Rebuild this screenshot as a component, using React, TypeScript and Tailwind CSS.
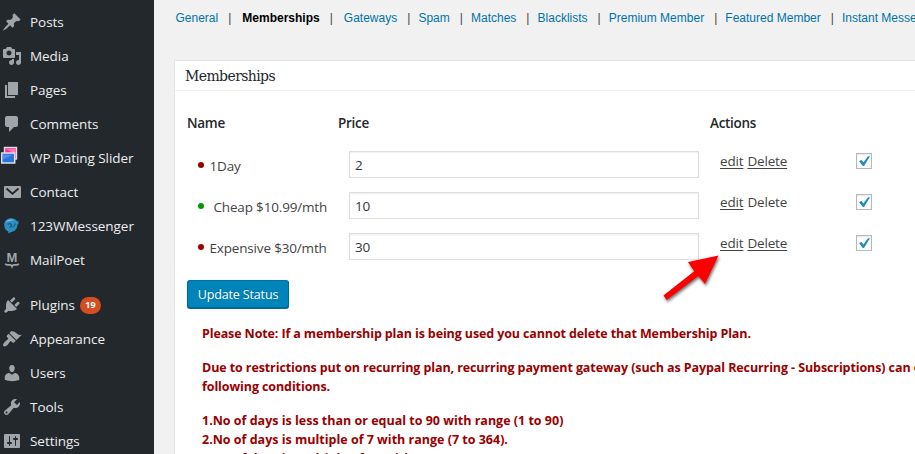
import type { ReactNode } from "react";

type MenuItem = {
  label: string;
  icon: ReactNode;
  badge?: string;
  spaced?: boolean;
};

type Plan = {
  name: string;
  price: string;
  active?: boolean;
  deletable: boolean;
};

function Dashicon({ d }: { d: string }) {
  return (
    <svg viewBox="0 0 20 20" className="size-5 fill-[#a0a5aa]">
      <path d={d} />
    </svg>
  );
}

function SliderIcon() {
  return (
    <svg viewBox="0 0 20 20" className="-mt-1 -ml-0.5 mr-0.5 size-5">
      <rect x="4.500" y="1.500" width="12" height="11.500" fill="#fb2f97" stroke="#eadbe5" strokeWidth="1.400" />
      <path d="M6 3h9.500v5z" fill="#ff7dbd" />
      <rect x="1.700" y="7" width="13" height="10" fill="#2b74dc" stroke="#dde1e6" strokeWidth="1.500" />
      <path d="M3 8.500h10L3 13.500z" fill="#4f90ea" />
    </svg>
  );
}

function MailIcon() {
  return (
    <svg viewBox="0 0 20 20" className="size-5">
      <rect x="2" y="4" width="17" height="12" rx="1" fill="#a0a5aa" />
      <path d="M4.500 6.500l6 5.200 6-5.200" fill="none" stroke="#23282d" strokeWidth="1.900" />
    </svg>
  );
}

function BirdIcon() {
  return (
    <svg viewBox="0 0 20 20" className="size-5">
      <path
        d="M2.200 8.500C2.200 4.800 5.200 2.200 9.200 2.200c3 0 5.200 1.300 6 3.300l1.900-.2-1 1.700.8.9-1.500.7c0 4.200-2.600 7.200-6.600 7.600l-2.600 1.400.2-1.900C3.800 14.600 2 11.700 2.200 8.500z"
        fill="#2a8fc4"
      />
      <path d="M4 6.300C5.600 3.700 9.500 2.700 12.300 4.200c-3-.1-5.500.7-8.300 2.100z" fill="#9cc6da" />
      <path d="M5.500 8.300c1.900-1 3.500-.6 3.900.8.3 1.200-.5 2-1.600 2.300M10.500 11.300c1.500-.5 2.600-1.800 3-3.800" fill="none" stroke="#1c4f6b" strokeWidth="1.100" />
    </svg>
  );
}

function MailPoetIcon() {
  return (
    <svg viewBox="0 0 20 20" className="size-5">
      <text x="9.900" y="12" textAnchor="middle" fontSize="13" fontWeight="700" letterSpacing="0" fontFamily="Liberation Sans, sans-serif" fill="#a0a5aa">
        M
      </text>
      <path d="M3.300 13.600c.8 1.800 2.600 1.300 4.500 1.300 1.200 0 1.800.5 2.200 1.600.4-1.100 1-1.600 2.200-1.600 1.900 0 3.700.5 4.500-1.300" fill="none" stroke="#a0a5aa" strokeWidth="1.700" />
    </svg>
  );
}

const menu: MenuItem[] = [
  {
    label: "Posts",
    icon: <Dashicon d="M10.44 3.02l1.82-1.82 6.36 6.35-1.83 1.82c-1.05-.68-2.48-.57-3.41.36l-.75.75c-.92.93-1.04 2.35-.35 3.41l-1.83 1.82-2.41-2.41-2.8 2.79c-.42.42-3.38 2.71-3.8 2.29s1.86-3.39 2.28-3.81l2.79-2.79L4.1 9.36l1.83-1.82c1.05.69 2.48.57 3.4-.36l.75-.75c.93-.92 1.05-2.35.36-3.41z" />,
  },
  {
    label: "Media",
    icon: <Dashicon d="M13 11V4c0-.55-.45-1-1-1h-1.67L9 1H5L3.67 3H2c-.55 0-1 .45-1 1v7c0 .55.45 1 1 1h10c.55 0 1-.45 1-1zM7 4.5c1.38 0 2.5 1.12 2.5 2.5S8.38 9.500 7 9.500 4.500 8.380 4.500 7 5.620 4.500 7 4.500zM14 6h5v10.500c0 1.380-1.120 2.500-2.500 2.500S14 17.880 14 16.500s1.120-2.500 2.500-2.500c.17 0 .34.02.5.05V9h-3V6zm-4 8.050V13h2v3.500c0 1.380-1.120 2.500-2.500 2.500S7 17.880 7 16.500 8.120 14 9.500 14c.17 0 .34.02.5.05z" />,
  },
  { label: "Pages", icon: <Dashicon d="M6 15V2h10v13H6zm-1 1h8v2H3V5h2v11z" /> },
  {
    label: "Comments",
    icon: <Dashicon d="M5 2h9c1.100 0 2 .9 2 2v7c0 1.100-.9 2-2 2h-2l-5 5v-5H5c-1.100 0-2-.9-2-2V4c0-1.100.9-2 2-2z" />,
  },
  { label: "WP Dating Slider", icon: <SliderIcon /> },
  { label: "Contact", icon: <MailIcon /> },
  { label: "123WMessenger", icon: <BirdIcon /> },
  { label: "MailPoet", icon: <MailPoetIcon /> },
  {
    label: "Plugins",
    badge: "19",
    spaced: true,
    icon: <Dashicon d="M13.11 4.36L9.87 7.6 8 5.73l3.24-3.24c.35-.34 1.05-.2 1.56.32.52.51.66 1.21.31 1.55zm-8 1.77l.91-1.12 9.01 9.01-1.19.84c-.71.71-2.63 1.16-3.82 1.16H6.14L4.9 17.26c-.59.59-1.54.59-2.12 0-.59-.58-.59-1.53 0-2.12l1.24-1.24v-3.88c0-1.13.4-3.19 1.09-3.89zm7.26 3.97l3.24-3.24c.34-.35 1.04-.21 1.55.31.52.51.66 1.21.31 1.55l-3.24 3.25z" />,
  },
  {
    label: "Appearance",
    icon: <Dashicon d="M14.48 11.06L7.41 3.99l1.5-1.5c.5-.56 2.3-.47 3.51.32 1.21.8 1.43 1.28 2.91 2.1 1.18.64 2.45 1.26 4.45.85zm-.71.71L6.7 4.7 4.93 6.47c-.39.39-.39 1.02 0 1.41l1.06 1.06c.39.39.39 1.03 0 1.42-.6.6-1.43 1.11-2.21 1.69-.35.26-.7.53-1.01.84C1.43 14.23.4 16.08 1.4 17.07c.99 1 2.84-.03 4.18-1.36.31-.31.58-.66.85-1.02.57-.78 1.08-1.61 1.69-2.21.39-.39 1.02-.39 1.41 0l1.06 1.06c.39.39 1.02.39 1.41 0z" />,
  },
  {
    label: "Users",
    icon: <Dashicon d="M10 9.25c-2.27 0-2.73-3.44-2.73-3.44C7 4.02 7.82 2 9.97 2c2.16 0 2.98 2.02 2.71 3.81 0 0-.41 3.44-2.68 3.44zm0 2.57L12.72 10c2.39 0 4.52 2.33 4.52 4.53v2.49s-3.65 1.13-7.24 1.13c-3.65 0-7.24-1.13-7.24-1.13v-2.49c0-2.25 1.94-4.48 4.47-4.48z" />,
  },
  {
    label: "Tools",
    icon: <Dashicon d="M16.68 9.77c-1.34 1.34-3.3 1.67-4.95.99l-5.41 6.52c-.99.99-2.59.99-3.58 0s-.99-2.59 0-3.57l6.52-5.42c-.68-1.65-.35-3.61.99-4.95 1.28-1.28 3.12-1.62 4.72-1.06l-2.89 2.89 2.82 2.82 2.86-2.87c.53 1.58.18 3.39-1.08 4.65zM3.81 16.21c.4.39 1.04.39 1.43 0 .4-.4.4-1.04 0-1.43-.39-.4-1.03-.4-1.43 0-.39.39-.39 1.03 0 1.43z" />,
  },
  {
    label: "Settings",
    icon: <Dashicon d="M18 16V4c0-.55-.45-1-1-1H3c-.55 0-1 .45-1 1v12c0 .55.45 1 1 1h14c.55 0 1-.45 1-1zM8 11h1c.55 0 1 .45 1 1s-.45 1-1 1H8v1.500c0 .28-.22.5-.5.5s-.5-.22-.5-.5V13H6c-.55 0-1-.45-1-1s.45-1 1-1h1V5.500c0-.28.22-.5.5-.5s.5.22.5.5V11zm5-2h-1c-.55 0-1-.45-1-1s.45-1 1-1h1V5.500c0-.28.22-.5.5-.5s.5.22.5.5V7h1c.55 0 1 .45 1 1s-.45 1-1 1h-1v5.500c0 .28-.22.5-.5.5s-.5-.22-.5-.5V9z" />,
  },
];

const tabs = [
  "General",
  "Memberships",
  "Gateways",
  "Spam",
  "Matches",
  "Blacklists",
  "Premium Member",
  "Featured Member",
  "Instant Messenger",
];

const plans: Plan[] = [
  { name: "1Day", price: "2", deletable: true },
  { name: "Cheap $10.99/mth", price: "10", active: true, deletable: false },
  { name: "Expensive $30/mth", price: "30", deletable: true },
];

function Sidebar() {
  return (
    <aside className="w-[154px] shrink-0 bg-[#23282d] pt-[5px]">
      {menu.map((item) => (
        <a
          key={item.label}
          className={`flex h-[34px] items-center pl-0.5 text-[13.5px] tracking-[-0.05px] text-[#eee] ${item.spaced ? "mt-[11px]" : ""}`}
        >
          {item.icon}
          <span className="ml-2 whitespace-nowrap">{item.label}</span>
          {item.badge ? (
            <span className="ml-[5px] flex h-[17px] w-[21px] items-center justify-center rounded-full bg-[#d54e21] text-[9px] font-bold tracking-normal text-white">
              {item.badge}
            </span>
          ) : null}
        </a>
      ))}
    </aside>
  );
}

function TabBar() {
  return (
    <nav className="ml-[21.5px] flex h-9 items-center whitespace-nowrap font-['Liberation_Sans',Arial,sans-serif] text-xs tracking-normal text-[#0073aa]">
      {tabs.map((tab, i) => (
        <div key={tab} className="flex">
          {i > 0 ? (
            <span className={`ml-2.5 text-[#444] ${i < 3 ? "mr-[11px]" : "mr-[8.1px]"}`}>|</span>
          ) : null}
          <a className={tab === "Memberships" ? "font-bold text-black" : ""}>{tab}</a>
        </div>
      ))}
    </nav>
  );
}

function PlanRow({ plan }: { plan: Plan }) {
  return (
    <div className="grid h-[41px] grid-cols-[151px_372px_146px_16px] items-start text-[#444]">
      <div className="mt-[13px] flex items-center pl-[11px] leading-[19px] whitespace-nowrap">
        <span className={`-mt-[3px] size-[5.5px] rounded-full ${plan.active ? "bg-[#090]" : "bg-[#900]"}`} />
        <span className={plan.active ? "ml-2.5" : "ml-1.5"}>{plan.name}</span>
      </div>
      <input
        defaultValue={plan.price}
        className="mt-[7px] ml-[11px] h-[27px] w-[350px] border border-[#ddd] bg-white px-[5px] text-[13.5px] text-[#32373c] shadow-[inset_0_1px_2px_rgba(0,0,0,0.07)]"
      />
      <div className="mt-2 flex gap-1 pl-2.5 leading-[19px]">
        <a className="underline underline-offset-2">edit</a>
        <a className={plan.deletable ? "underline underline-offset-2" : ""}>Delete</a>
      </div>
      <span className="mt-[9px] flex size-4 items-center justify-center border border-[#b4b9be] bg-white shadow-[inset_0_1px_2px_rgba(0,0,0,0.1)]">
        <svg viewBox="0 0 14 14" className="size-3.5 shrink-0 fill-[#1e8cbe]">
          <path d="M2 7.100L4.600 6l1.800 2.400L11 2.300h2L7 12H5.800z" />
        </svg>
      </span>
    </div>
  );
}

function Notes() {
  return (
    <div className="mt-4 ml-[15px] text-[12.5px] leading-[19px] font-bold whitespace-nowrap text-[#900]">
      <p className="mb-[15px] tracking-[-0.12px]">
        Please Note: If a membership plan is being used you cannot delete that Membership Plan.
      </p>
      <p className="mb-[15px] tracking-[-0.1px]">
        Due to restrictions put on recurring plan, recurring payment gateway (such as Paypal Recurring - Subscriptions) can only be used with
        <br />
        following conditions.
      </p>
      <p className="tracking-normal">
        1.No of days is less than or equal to 90 with range (1 to 90)
        <br />
        2.No of days is multiple of 7 with range (7 to 364).
        <br />
        3.No of days is multiple of 30 with range (30 to 720).
      </p>
    </div>
  );
}

function Arrow() {
  return (
    <svg viewBox="0 0 64 56" className="absolute top-[250px] left-[660px] h-14 w-16 drop-shadow-[1px_2px_1.5px_rgba(0,0,0,0.55)]">
      <path d="M58.500 5.500L28 12l6.200 9.300L3.400 45.600l3.300 4.500 31.500-24L45 34z" fill="#fe0000" />
    </svg>
  );
}

export default function App() {
  return (
    <div className="relative flex h-[454px] w-[915px] overflow-hidden bg-[#f1f1f1] font-['Open_Sans','Noto_Sans',sans-serif] text-[13.5px] tracking-[-0.17px]">
      <Sidebar />
      <main className="min-w-0 flex-1 overflow-hidden">
        <TabBar />
        <section className="mt-6 ml-5 h-[420px] w-[760px] border border-[#e5e5e5] bg-white">
          <h2 className="flex h-[30px] items-center border-b border-[#eee] pt-0.5 pl-2.5 font-['DejaVu_Serif',serif] text-[14px] tracking-[-0.6px] text-[#23282d]">
            Memberships
          </h2>
          <div className="pl-3">
            <div className="grid h-[53px] grid-cols-[151px_372px_146px] pt-[23px] leading-[19px] font-semibold tracking-[-0.3px] text-[#23282d]">
              <span>Name</span>
              <span>Price</span>
              <span>Actions</span>
            </div>
            {plans.map((plan) => (
              <PlanRow key={plan.name} plan={plan} />
            ))}
            <button className="mt-[13px] block h-7 w-[102px] rounded-[3px] border border-[#006799] border-t-[#0073aa] bg-[#0085ba] pt-0.5 text-[12.5px] leading-6 tracking-[-0.15px] whitespace-nowrap text-white shadow-[0_1px_0_#006799] [text-shadow:0_-1px_1px_#006799]">
              Update Status
            </button>
            <Notes />
          </div>
        </section>
      </main>
      <Arrow />
    </div>
  );
}
